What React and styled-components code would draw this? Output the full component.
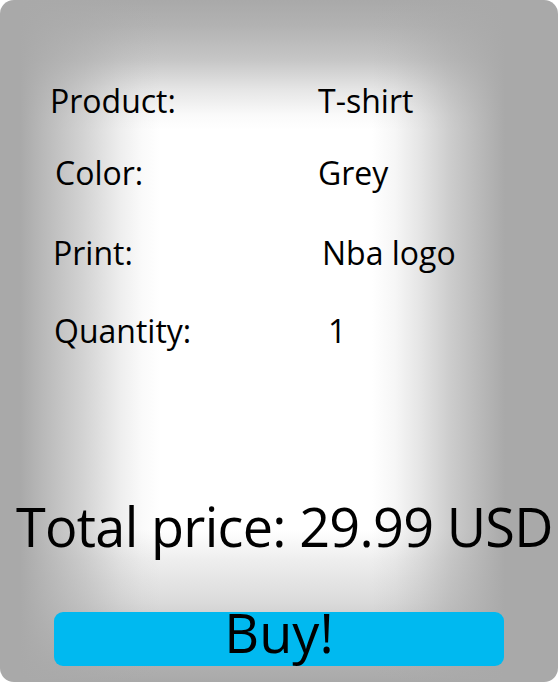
import React from "react";
import styled, { createGlobalStyle } from "styled-components";

const Global = createGlobalStyle`
  html, body { margin: 0; padding: 0; background: #ffffff; }
  body { font-family: "Open Sans", "Noto Sans", sans-serif; }
`;

const Card = styled.div`
  box-sizing: border-box;
  width: 558px;
  height: 682px;
  border-radius: 14px;
  overflow: hidden;
  background:
    linear-gradient(
      to right,
      rgba(169, 169, 169, 1) 0px,
      rgba(169, 169, 169, 1) 20px,
      rgba(169, 169, 169, 0.8) 45px,
      rgba(169, 169, 169, 0.5) 85px,
      rgba(169, 169, 169, 0.2) 120px,
      rgba(169, 169, 169, 0.06) 142px,
      rgba(169, 169, 169, 0) 160px,
      rgba(169, 169, 169, 0) 372px,
      rgba(169, 169, 169, 0.1) 395px,
      rgba(169, 169, 169, 0.3) 420px,
      rgba(169, 169, 169, 0.59) 450px,
      rgba(169, 169, 169, 0.8) 478px,
      rgba(169, 169, 169, 1) 505px,
      rgba(169, 169, 169, 1) 558px
    ),
    linear-gradient(
      to bottom,
      #a9a9a9 0px,
      #b2b2b2 25px,
      #c6c6c6 60px,
      #e6e6e6 90px,
      #fafafa 115px,
      #ffffff 130px,
      #ffffff 530px,
      #eeeeee 560px,
      #dcdcdc 600px,
      #c8c8c8 630px,
      #b0b0b0 665px,
      #a9a9a9 682px
    );
  display: flex;
  flex-direction: column;
  padding-top: 81px;
  color: #000;
`;

const Details = styled.div`
  display: flex;
  flex-direction: column;
`;

const Row = styled.div`
  display: grid;
  grid-template-columns: 268px 1fr;
  height: 40px;
  line-height: 40px;
  font-size: 32px;
  margin-top: ${(p) => p.$gap || 0}px;
  padding-left: 50px;
`;

const Label = styled.span`
  padding-left: ${(p) => p.$indent || 0}px;
  white-space: nowrap;
`;

const Value = styled.span`
  padding-left: ${(p) => p.$indent || 0}px;
  white-space: nowrap;
`;

const Total = styled.div`
  margin-top: 143px;
  font-size: 54px;
  letter-spacing: -0.7px;
  line-height: 64px;
  height: 64px;
  padding-left: 16px;
  white-space: nowrap;
`;

const BuyButton = styled.button`
  box-sizing: border-box;
  margin: 54px 0 0 54px;
  width: 450px;
  height: 54px;
  border: none;
  border-radius: 9px;
  background: #00b9f0;
  color: #000;
  font-family: "Open Sans", "Noto Sans", sans-serif;
  font-size: 54px;
  line-height: 40px;
  padding: 0 0 14px 0;
  display: block;
  text-align: center;
  overflow: visible;
  align-self: flex-start;
  cursor: pointer;
`;

const rows = [
  { label: "Product:", value: "T-shirt", gap: 0, li: 0, vi: 0 },
  { label: "Color:", value: "Grey", gap: 32, li: 5, vi: 0 },
  { label: "Print:", value: "Nba logo", gap: 40, li: 3, vi: 4 },
  { label: "Quantity:", value: "1", gap: 38, li: 4, vi: 10 },
];

export default function App() {
  return (
    <>
      <Global />
      <Card>
        <Details>
          {rows.map((r) => (
            <Row key={r.label} $gap={r.gap}>
              <Label $indent={r.li}>{r.label}</Label>
              <Value $indent={r.vi}>{r.value}</Value>
            </Row>
          ))}
        </Details>
        <Total>Total price: 29.99 USD</Total>
        <BuyButton>Buy!</BuyButton>
      </Card>
    </>
  );
}
